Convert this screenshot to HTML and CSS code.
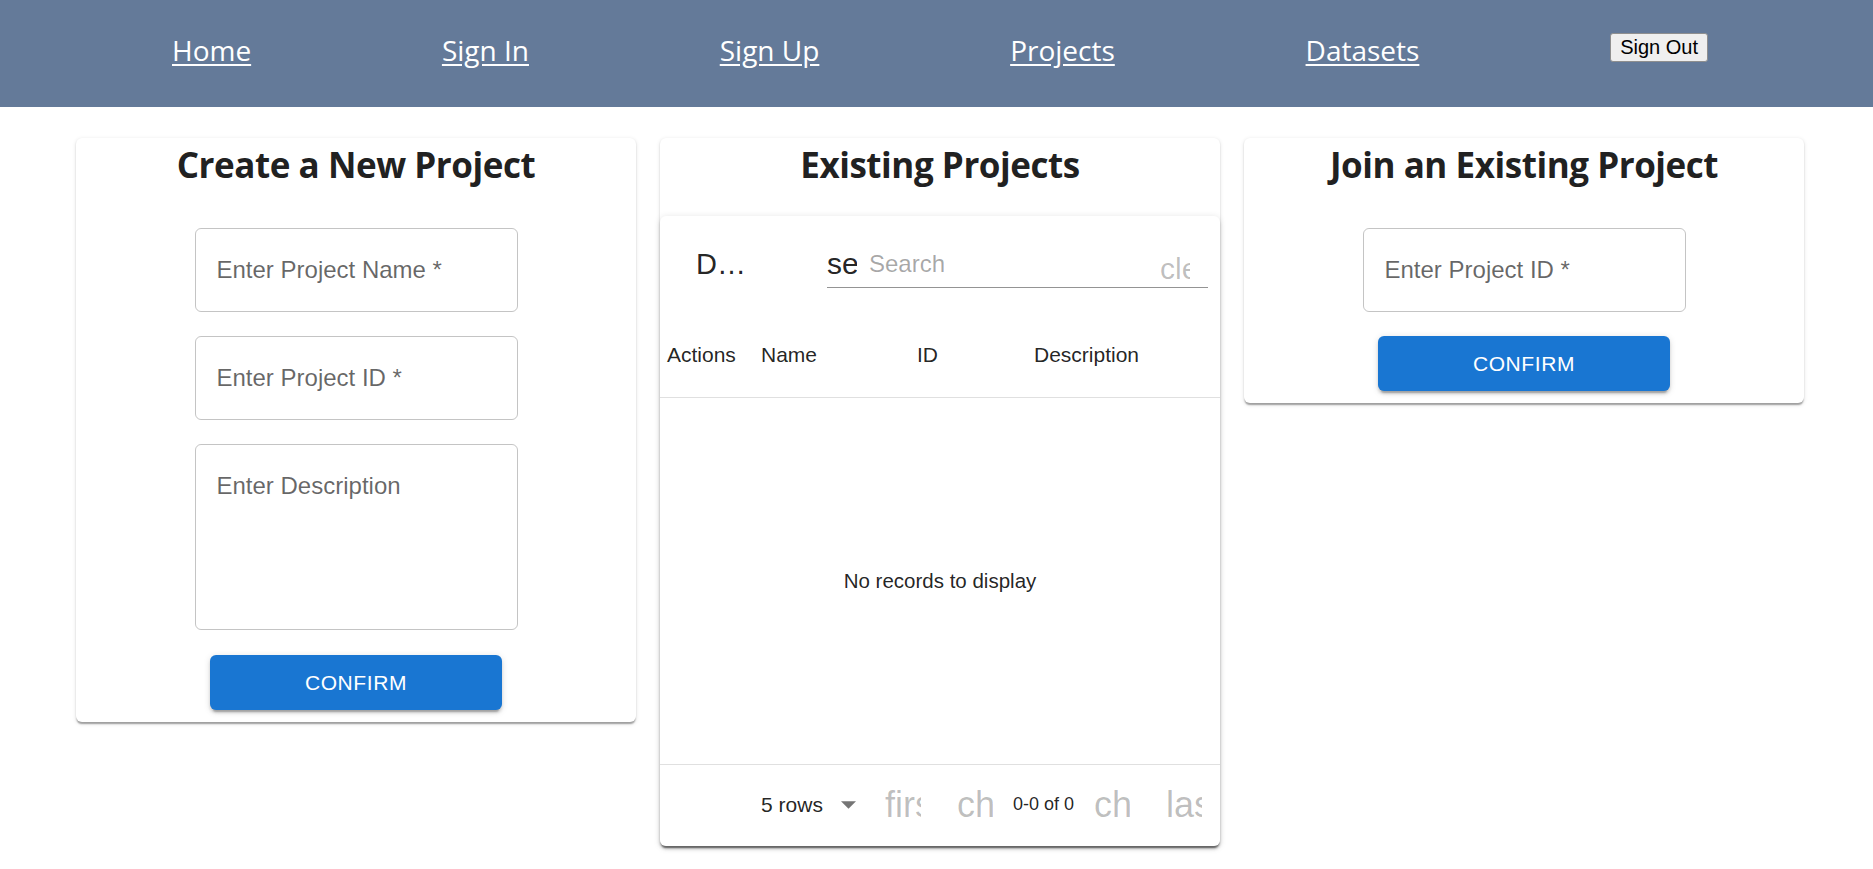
FILE: index.html
```html
<!DOCTYPE html>
<html lang="en">
<head>
<meta charset="utf-8">
<title>Projects</title>
<link rel="stylesheet" href="styles.css">
</head>
<body>
<header class="topbar">
  <nav class="nav">
    <a href="#" class="nav-link">Home</a>
    <a href="#" class="nav-link">Sign In</a>
    <a href="#" class="nav-link">Sign Up</a>
    <a href="#" class="nav-link">Projects</a>
    <a href="#" class="nav-link">Datasets</a>
    <button type="button" class="signout">Sign Out</button>
  </nav>
</header>

<main class="cards">
  <section class="card">
    <h2 class="card-title">Create a New Project</h2>
    <form class="form">
      <label class="field"><span class="field-label">Enter Project Name *</span><input class="field-input" type="text"></label>
      <label class="field"><span class="field-label">Enter Project ID *</span><input class="field-input" type="text"></label>
      <label class="field field-multi"><span class="field-label">Enter Description</span><textarea class="field-input"></textarea></label>
      <button type="button" class="btn-confirm btn-gap">Confirm</button>
    </form>
  </section>

  <section class="card card-table">
    <h2 class="card-title">Existing Projects</h2>
    <div class="table-paper">
      <div class="toolbar">
        <div class="toolbar-title">D…</div>
        <div class="search">
          <span class="icon icon-search">search</span>
          <span class="search-text">Search</span>
          <span class="icon icon-clear">clear</span>
        </div>
      </div>
      <div class="thead">
        <div class="th th-first">Actions</div>
        <div class="th">Name</div>
        <div class="th">ID</div>
        <div class="th">Description</div>
      </div>
      <div class="tbody">No records to display</div>
      <div class="tfoot">
        <div class="rows-select">
          <span>5 rows</span>
          <svg class="rows-arrow" width="15" height="8" viewBox="7 10 10 5"><path d="M7 10l5 5 5-5z" fill="rgba(0,0,0,0.54)"/></svg>
        </div>
        <span class="page-btn"><span class="icon icon-lg">first_page</span></span>
        <span class="page-btn"><span class="icon icon-lg">chevron_left</span></span>
        <span class="page-caption">0-0 of 0</span>
        <span class="page-btn"><span class="icon icon-lg">chevron_right</span></span>
        <span class="page-btn"><span class="icon icon-lg">last_page</span></span>
      </div>
    </div>
  </section>

  <section class="card">
    <h2 class="card-title">Join an Existing Project</h2>
    <form class="form">
      <label class="field"><span class="field-label">Enter Project ID *</span><input class="field-input" type="text"></label>
      <button type="button" class="btn-confirm">Confirm</button>
    </form>
  </section>
</main>
</body>
</html>
```

FILE: styles.css
```css
* { box-sizing: border-box; }

body {
  margin: 0;
  background: #fff;
  font-family: "Liberation Sans", Arial, sans-serif;
  color: rgba(0, 0, 0, 0.87);
}

/* ---------- top bar ---------- */
.topbar {
  background: #647a99;
  height: 107px;
}

.nav {
  display: flex;
  justify-content: space-between;
  align-items: flex-start;
  height: 100%;
  padding: 30px 165px 0 172px;
}

.nav-link {
  font-family: "Open Sans", sans-serif;
  font-size: 28px;
  line-height: 40px;
  color: #fff;
  text-decoration: underline;
  text-underline-offset: 3px;
}

.signout {
  margin-top: 3px;
  height: 29px;
  padding: 0 9px;
  font-family: "Liberation Sans", Arial, sans-serif;
  font-size: 20px;
  line-height: 27px;
  color: #000;
  background: #efefef;
  border: 1px solid #8f8f8f;
  border-radius: 3px;
}

/* ---------- cards ---------- */
.cards {
  display: grid;
  grid-template-columns: repeat(3, 1fr);
  gap: 24px;
  align-items: start;
  padding: 31px 69px 24px 76px;
}

.card {
  display: flex;
  flex-direction: column;
  align-items: center;
  padding-bottom: 12px;
  background: #fff;
  border-radius: 6px;
  box-shadow: 0 3px 1.5px -1.5px rgba(0, 0, 0, 0.2),
              0 1.5px 1.5px 0 rgba(0, 0, 0, 0.14),
              0 1.5px 4.5px 0 rgba(0, 0, 0, 0.12);
}

.card-table { padding-bottom: 0; }

.card-title {
  margin: 6px 0 0;
  font-family: "Open Sans", sans-serif;
  font-weight: 700;
  font-size: 35px;
  line-height: 42px;
  letter-spacing: -0.45px;
  color: #212121;
  text-align: center;
}

/* ---------- form ---------- */
.form {
  display: flex;
  flex-direction: column;
  align-items: center;
  gap: 24px;
  margin-top: 42px;
}

.field {
  position: relative;
  display: flex;
  align-items: center;
  width: 323px;
  height: 84px;
  padding: 0 21px;
  border: 1px solid rgba(0, 0, 0, 0.23);
  border-radius: 6px;
}

.field-multi {
  height: 186px;
  align-items: flex-start;
  padding-top: 24px;
}

.field-label {
  font-size: 24px;
  line-height: 34px;
  color: rgba(0, 0, 0, 0.6);
}

.field-input {
  position: absolute;
  inset: 0;
  width: 100%;
  height: 100%;
  border: 0;
  background: transparent;
  opacity: 0;
  resize: none;
}

.btn-confirm {
  width: 292px;
  height: 55px;
  background: #1976d2;
  color: #fff;
  border: 0;
  border-radius: 6px;
  font-family: "Liberation Sans", Arial, sans-serif;
  font-size: 21px;
  letter-spacing: 0.6px;
  text-transform: uppercase;
  box-shadow: 0 4.5px 1.5px -3px rgba(0, 0, 0, 0.2),
              0 3px 3px 0 rgba(0, 0, 0, 0.14),
              0 1.5px 7.5px 0 rgba(0, 0, 0, 0.12);
}

.btn-gap { margin-top: 1px; }

/* ---------- table ---------- */
.table-paper {
  width: 100%;
  margin-top: 30px;
  background: #fff;
  border-radius: 6px;
  box-shadow: 0 4.5px 1.5px -3px rgba(0, 0, 0, 0.2),
              0 3px 3px 0 rgba(0, 0, 0, 0.14),
              0 1.5px 7.5px 0 rgba(0, 0, 0, 0.12);
}

.toolbar {
  display: flex;
  align-items: center;
  height: 96px;
  padding: 0 12px 0 36px;
}

.toolbar-title {
  flex: 1;
  font-size: 29px;
  white-space: nowrap;
}

.search {
  display: flex;
  align-items: center;
  width: 381px;
  height: 48px;
  border-bottom: 1px solid rgba(0, 0, 0, 0.42);
}

.icon {
  display: inline-block;
  width: 1em;
  overflow: hidden;
  white-space: nowrap;
  line-height: 1;
}

.icon-search {
  font-size: 30px;
  color: rgba(0, 0, 0, 0.87);
}

.search-text {
  flex: 1;
  margin-left: 12px;
  font-size: 24px;
  color: rgba(0, 0, 0, 0.35);
}

.icon-clear {
  font-size: 30px;
  margin: 10px 18px 0 0;
  color: rgba(0, 0, 0, 0.26);
}

.thead {
  display: grid;
  grid-template-columns: 85px 156px 117px 1fr;
  align-items: center;
  height: 86px;
  border-bottom: 1px solid #e0e0e0;
  font-size: 21px;
}

.th { padding-left: 16px; }
.th-first { padding-left: 7px; }

.tbody {
  display: flex;
  align-items: center;
  justify-content: center;
  height: 367px;
  border-bottom: 1px solid #e0e0e0;
  font-size: 20.5px;
}

.tfoot {
  display: flex;
  justify-content: flex-end;
  align-items: center;
  height: 81px;
  padding-bottom: 2px;
}

.rows-select {
  display: flex;
  align-items: center;
  margin-right: 11px;
  font-size: 21px;
}

.rows-arrow { margin-left: 18px; }

.page-btn {
  display: flex;
  justify-content: center;
  width: 72px;
}

.icon-lg {
  font-size: 36px;
  color: rgba(0, 0, 0, 0.26);
}

.page-caption {
  padding: 0 2px;
  font-size: 18px;
}
```
